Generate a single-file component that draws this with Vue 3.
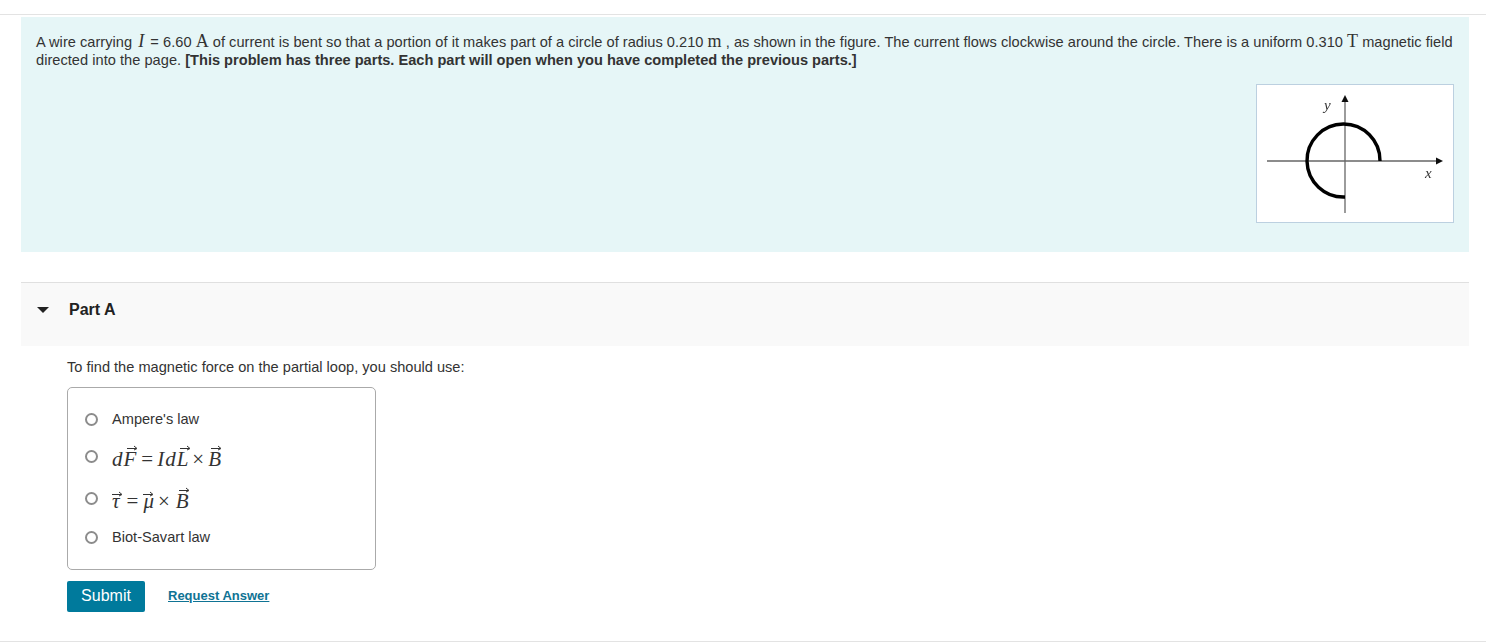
<script setup>
const title = 'Part A'
</script>

<template>
  <div class="page">
    <div class="intro">
      <p class="statement">A wire carrying <span class="mi">I</span> = 6.60 <span class="mu">A</span> of current is bent so that a portion of it makes part of a circle of radius 0.210 <span class="mu">m</span> , as shown in the figure. The current flows clockwise around the circle. There is a uniform 0.310 <span class="mu">T</span> magnetic field directed into the page. <strong>[This problem has three parts. Each part will open when you have completed the previous parts.]</strong></p>
      <div class="figure-row">
        <div class="figure">
          <svg width="196" height="137" viewBox="1257 85 196 137" class="figure-svg">
            <defs>
              <filter id="soft" x="-5%" y="-5%" width="110%" height="110%">
                <feGaussianBlur stdDeviation="0.45" />
              </filter>
            </defs>
            <g filter="url(#soft)">
              <line x1="1345" y1="99" x2="1345" y2="213" stroke="#666" stroke-width="1.3" />
              <path d="M1345 95 L1341.5 102 L1348.5 102 Z" fill="#111" />
              <line x1="1267" y1="161" x2="1438" y2="161" stroke="#666" stroke-width="1.3" />
              <path d="M1443 161 L1436 157.5 L1436 164.5 Z" fill="#111" />
              <path d="M1380 161 A36.5 36.5 0 1 0 1345 197" fill="none" stroke="#000" stroke-width="3.4" />
              <text x="1324" y="110" class="axis-label">y</text>
              <text x="1425" y="178" class="axis-label">x</text>
            </g>
          </svg>
        </div>
      </div>
    </div>

    <section class="part">
      <header class="part-head">
        <span class="caret"></span>
        <h2 class="part-title">{{ title }}</h2>
      </header>
      <div class="part-body">
        <p class="question">To find the magnetic force on the partial loop, you should use:</p>
        <div class="options">
          <label class="option">
            <span class="radio"></span>
            <span>Ampere's law</span>
          </label>
          <label class="option option-math">
            <span class="radio"></span>
            <span class="formula">
              <i class="d">d</i><span class="vec"><i>F</i><svg class="arrow" width="11" height="6" viewBox="0 0 11 6"><path d="M0 3.5 H9 M7 1 L10 3.5 L7 5" fill="none" stroke="#333" stroke-width="1" /></svg></span><span class="eq">=</span><i class="i">I</i><i class="d">d</i><span class="vec"><i>L</i><svg class="arrow" width="11" height="6" viewBox="0 0 11 6"><path d="M0 3.5 H9 M7 1 L10 3.5 L7 5" fill="none" stroke="#333" stroke-width="1" /></svg></span><span class="times">×</span><span class="vec"><i>B</i><svg class="arrow" width="11" height="6" viewBox="0 0 11 6"><path d="M0 3.5 H9 M7 1 L10 3.5 L7 5" fill="none" stroke="#333" stroke-width="1" /></svg></span>
            </span>
          </label>
          <label class="option option-math">
            <span class="radio"></span>
            <span class="formula">
              <span class="vec"><i>τ</i><svg class="arrow small" width="11" height="6" viewBox="0 0 11 6"><path d="M0 3.5 H9 M7 1 L10 3.5 L7 5" fill="none" stroke="#333" stroke-width="1" /></svg></span><span class="eq wide">=</span><span class="vec"><i>μ</i><svg class="arrow small" width="11" height="6" viewBox="0 0 11 6"><path d="M0 3.5 H9 M7 1 L10 3.5 L7 5" fill="none" stroke="#333" stroke-width="1" /></svg></span><span class="times narrow">×</span><span class="vec"><i>B</i><svg class="arrow" width="11" height="6" viewBox="0 0 11 6"><path d="M0 3.5 H9 M7 1 L10 3.5 L7 5" fill="none" stroke="#333" stroke-width="1" /></svg></span>
            </span>
          </label>
          <label class="option">
            <span class="radio"></span>
            <span>Biot-Savart law</span>
          </label>
        </div>
        <div class="actions">
          <button class="submit" type="button">Submit</button>
          <a class="request" href="#">Request Answer</a>
        </div>
      </div>
    </section>
    <div class="end-rule"></div>
  </div>
</template>

<style>
html, body { margin: 0; background: #fff; }
</style>

<style scoped>
.page {
  height: 642px;
  padding-top: 14px;
  box-sizing: border-box;
  overflow: hidden;
  font-family: "Liberation Sans", Arial, sans-serif;
  font-size: 14.6px;
  color: #333;
  background: linear-gradient(#e3e3e3, #e3e3e3) top 14px left 0 / 100% 1px no-repeat #fff;
}
.intro {
  margin: 3px 17px 0 21px;
  padding: 16px 15px 29px;
  height: 235px;
  box-sizing: border-box;
  background: #e6f6f7;
}
.statement { margin: 0; line-height: 18px; letter-spacing: 0.03px; }
.statement strong { font-weight: 700; letter-spacing: 0; }
.mi {
  display: inline-block;
  padding: 0 2px;
  font-family: "Liberation Serif", serif;
  font-style: italic;
  font-size: 18px;
  line-height: 16px;
}
.mu { font-family: "Liberation Serif", serif; font-size: 18px; line-height: 16px; }
.figure-row { display: flex; justify-content: flex-end; margin-top: 15px; }
.figure {
  width: 196px;
  height: 137px;
  border: 1px solid #bcd0e0;
  background: #fff;
}
.figure-svg { display: block; }
.axis-label { font-family: "Liberation Serif", serif; font-style: italic; font-size: 15px; fill: #333; }
.part { margin: 30px 17px 0 21px; }
.part-head {
  display: flex;
  align-items: center;
  height: 64px;
  box-sizing: border-box;
  padding: 0 0 10px 16px;
  border-top: 1px solid #e0e0e0;
  background: #f9f9f9;
}
.caret {
  width: 0;
  height: 0;
  border-left: 6px solid transparent;
  border-right: 6px solid transparent;
  border-top: 6px solid #222;
}
.part-title {
  margin: 0 0 0 20px;
  font-size: 16px;
  font-weight: 700;
  color: #222;
}
.part-body { padding: 12px 0 0 46px; }
.question { margin: 0; line-height: 18px; }
.options {
  width: 309px;
  height: 183px;
  margin-top: 11px;
  padding: 16px 0 0 17px;
  box-sizing: border-box;
  border: 1px solid #aaa;
  border-radius: 5px;
}
.option {
  display: flex;
  align-items: center;
  gap: 14px;
  height: 30px;
  margin-bottom: 4px;
  line-height: 30px;
}
.option-math { height: 38px; }
.radio {
  flex: none;
  width: 9px;
  height: 9px;
  border: 2px solid #8c8c8c;
  border-radius: 50%;
  background: #fff;
}
.option-math .radio { margin-top: -2px; }
.formula {
  display: inline-flex;
  align-items: baseline;
  padding-top: 3px;
  font-family: "Liberation Serif", serif;
  font-size: 21px;
  line-height: 30px;
}
.d { margin-right: 1px; }
.i { margin-right: 1px; }
.vec { position: relative; display: inline-block; }
.arrow { position: absolute; left: 3px; top: 1px; }
.arrow.small { left: 0; top: 5px; }
.eq { margin: 0 4px 0 5px; }
.eq.wide { margin: 0 5px 0 7px; }
.times { margin: 0 4px 0 4px; }
.times.narrow { margin: 0 6px 0 4px; }
.actions {
  display: flex;
  align-items: center;
  gap: 23px;
  margin-top: 11px;
}
.submit {
  width: 78px;
  height: 31px;
  padding: 0 0 2px;
  border: 0;
  border-radius: 2px;
  background: #007a9c;
  color: #fff;
  font-family: inherit;
  font-size: 16px;
}
.request {
  margin-top: -2px;
  font-size: 13px;
  font-weight: 700;
  color: #0f7394;
}
.end-rule {
  margin-top: 29px;
  height: 1px;
  background: #e3e3e3;
}
</style>
